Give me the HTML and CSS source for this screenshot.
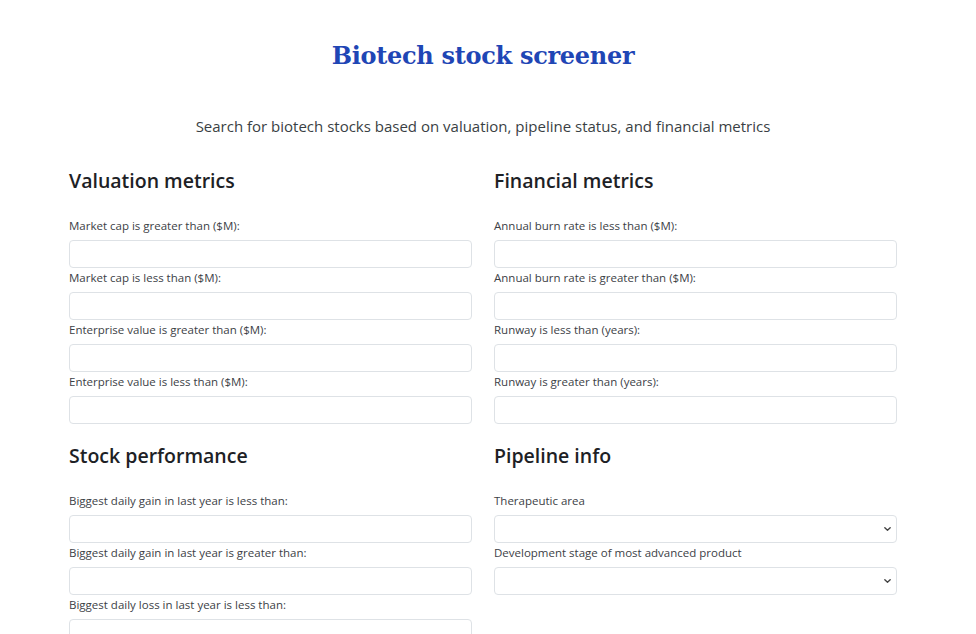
FILE: index.html
```html
<!DOCTYPE html>
<html lang="en">
<head>
<meta charset="utf-8">
<title>Biotech stock screener</title>
<link rel="stylesheet" href="styles.css">
</head>
<body>
<main class="page">
  <h1 class="title">Biotech stock screener</h1>
  <p class="subtitle">Search for biotech stocks based on valuation, pipeline status, and financial metrics</p>
  <div class="grid">
    <section class="group">
      <h2 class="group-title">Valuation metrics</h2>
      <label class="field"><span class="label">Market cap is greater than ($M):</span><input class="input" type="text"></label>
      <label class="field"><span class="label">Market cap is less than ($M):</span><input class="input" type="text"></label>
      <label class="field"><span class="label">Enterprise value is greater than ($M):</span><input class="input" type="text"></label>
      <label class="field"><span class="label">Enterprise value is less than ($M):</span><input class="input" type="text"></label>
    </section>
    <section class="group">
      <h2 class="group-title">Financial metrics</h2>
      <label class="field"><span class="label">Annual burn rate is less than ($M):</span><input class="input" type="text"></label>
      <label class="field"><span class="label">Annual burn rate is greater than ($M):</span><input class="input" type="text"></label>
      <label class="field"><span class="label">Runway is less than (years):</span><input class="input" type="text"></label>
      <label class="field"><span class="label">Runway is greater than (years):</span><input class="input" type="text"></label>
    </section>
    <section class="group">
      <h2 class="group-title">Stock performance</h2>
      <label class="field"><span class="label">Biggest daily gain in last year is less than:</span><input class="input" type="text"></label>
      <label class="field"><span class="label">Biggest daily gain in last year is greater than:</span><input class="input" type="text"></label>
      <label class="field"><span class="label">Biggest daily loss in last year is less than:</span><input class="input" type="text"></label>
      <label class="field"><span class="label">Biggest daily loss in last year is greater than:</span><input class="input" type="text"></label>
    </section>
    <section class="group">
      <h2 class="group-title">Pipeline info</h2>
      <label class="field"><span class="label">Therapeutic area</span>
        <span class="select-wrap"><select class="input select"><option></option></select>
        <svg class="chev" viewBox="0 0 10 6" width="7" height="4"><path d="M1 1l4 4 4-4" fill="none" stroke="#444" stroke-width="2" stroke-linecap="round" stroke-linejoin="round"/></svg></span>
      </label>
      <label class="field"><span class="label">Development stage of most advanced product</span>
        <span class="select-wrap"><select class="input select"><option></option></select>
        <svg class="chev" viewBox="0 0 10 6" width="7" height="4"><path d="M1 1l4 4 4-4" fill="none" stroke="#444" stroke-width="2" stroke-linecap="round" stroke-linejoin="round"/></svg></span>
      </label>
    </section>
  </div>
</main>
</body>
</html>
```
FILE: styles.css
```css
* { box-sizing: border-box; }
html, body { margin: 0; padding: 0; background: #fff; }
body { font-family: "Open Sans", "Noto Sans", sans-serif; color: #212529; }
.page { width: 828px; margin-left: 69px; padding-top: 38px; }
.title {
  margin: 0;
  text-align: center;
  font-family: "DejaVu Serif", "Liberation Serif", serif;
  font-weight: 700;
  font-size: 24px;
  line-height: 36px;
  color: #1f46b5;
  letter-spacing: -0.3px;
}
.subtitle {
  margin: 42px 0 0;
  text-align: center;
  font-size: 15px;
  line-height: 20px;
  color: #3a3f44;
}
.grid {
  display: grid;
  grid-template-columns: 1fr 1fr;
  column-gap: 22px;
  row-gap: 17px;
  margin-top: 30px;
}
.group { display: flex; flex-direction: column; }
.group-title {
  margin: 0 0 19px;
  font-size: 19.5px;
  font-weight: 600;
  line-height: 30px;
  color: #1d2125;
}
.group-title + .field .label { padding-top: 1px; }
.field { display: flex; flex-direction: column; }
.label {
  font-size: 11.5px;
  line-height: 20px;
  padding-bottom: 4px;
  color: #3c4146;
}
.input {
  display: block;
  width: 100%;
  height: 28px;
  margin: 0;
  border: 1px solid #dee2e6;
  border-radius: 4px;
  background: #fff;
  font: inherit;
  padding: 0 8px;
}
.select-wrap { position: relative; display: block; }
.select { appearance: none; -webkit-appearance: none; }
.chev { position: absolute; right: 6px; top: 12px; pointer-events: none; }
```
